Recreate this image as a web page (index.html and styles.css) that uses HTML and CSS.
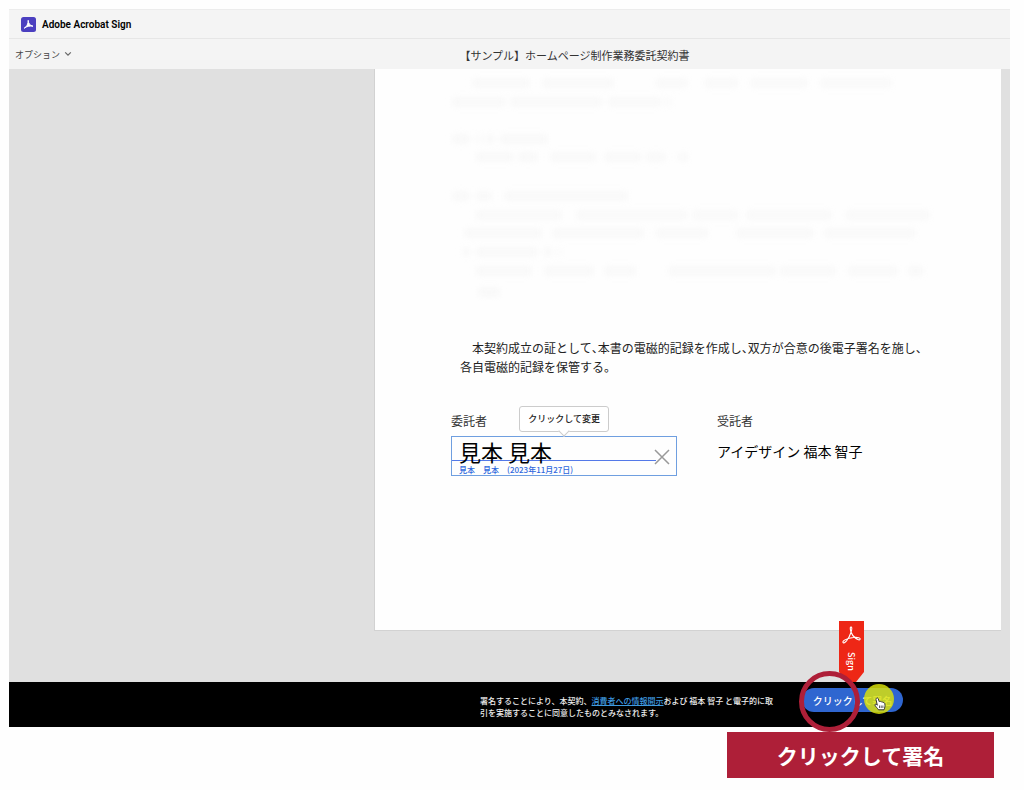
FILE: index.html
```html
<!DOCTYPE html>
<html lang="ja">
<head>
<meta charset="utf-8">
<meta name="viewport" content="width=device-width, initial-scale=1">
<title>Adobe Acrobat Sign</title>
<link rel="stylesheet" href="styles.css">
</head>
<body>
<div class="window">
  <header class="brand">
    <svg class="brand-logo" viewBox="0 0 15 15" aria-hidden="true">
      <rect width="15" height="15" rx="2.5" fill="#4b3fc0"/>
      <path d="M3.2 11.200C5.600 10 7.300 7 7.200 3.300C7.300 6.500 9 8.600 12 9.200C9 8.700 6 9.200 3.200 11.200Z" fill="#fff" stroke="#fff" stroke-width="1" stroke-linejoin="round"/>
    </svg>
    <span class="brand-name">Adobe Acrobat Sign</span>
  </header>
  <div class="toolbar">
    <button class="options" type="button">オプション
      <svg class="chevron" viewBox="0 0 8 6" aria-hidden="true"><path d="M1.200 1.300L4 4.200L6.800 1.300" fill="none" stroke="#666" stroke-width="1.200"/></svg>
    </button>
    <h1 class="doc-title">【サンプル】ホームページ制作業務委託契約書</h1>
  </div>
  <main class="viewer">
    <article class="sheet">
      <svg class="faded" viewBox="0 0 520 240" aria-hidden="true">
        <g fill="none" stroke="#f7f7f7" stroke-width="7">
          <path d="M32 13H480" stroke-dasharray="56 14 70 44 30 18 32 14"/>
          <path d="M12 32H230" stroke-dasharray="52 6 90 8"/>
          <path d="M12 69H106" stroke-dasharray="16 8 4 6 6 8 46 0"/>
          <path d="M36 87H246" stroke-dasharray="36 6 18 14 44 10"/>
          <path d="M12 126H186" stroke-dasharray="16 8 14 14 140 0"/>
          <path d="M36 145H488" stroke-dasharray="84 16 110 6 44 10"/>
          <path d="M24 163H482" stroke-dasharray="76 12 90 14 50 30"/>
          <path d="M22 182H120" stroke-dasharray="6 8 60 8"/>
          <path d="M36 201H482" stroke-dasharray="54 14 48 12 30 34 106 6"/>
          <path d="M38 222H58"/>
        </g>
      </svg>
      <p class="closing">　本契約成立の証として<span class="half">、</span>本書の電磁的記録を作成し<span class="half">、</span>双方が合意の後電子署名を施し、<br>各自電磁的記録を保管する。</p>
      <div class="parties">
        <section class="party">
          <h2 class="role">委託者</h2>
          <div class="field">
            <div class="tip" role="tooltip">クリックして変更</div>
            <div class="signature">見本 見本</div>
            <div class="signed-on">見本　見本　(2023年11月27日)</div>
            <button class="clear" type="button" aria-label="署名を消去">
              <svg viewBox="0 0 16 16" aria-hidden="true"><path d="M1 1L15 15M15 1L1 15" stroke="#999" stroke-width="1.500"/></svg>
            </button>
          </div>
        </section>
        <section class="party">
          <h2 class="role">受託者</h2>
          <div class="contractor">アイデザイン 福本 智子</div>
        </section>
      </div>
    </article>
  </main>
  <footer class="consent">
    <p class="consent-text">署名することにより、本契約、<a href="#">消費者への情報開示</a>および 福本 智子 と電子的に取<br>引を実施することに同意したものとみなされます。</p>
    <div class="action">
      <div class="ribbon">
        <svg class="ribbon-shape" viewBox="0 0 25 61" aria-hidden="true">
          <path d="M0 0H25V51L17 61H8L0 51Z" fill="#ee2716"/>
          <path d="M4 21.500C3 20 8 17 14.500 16.500C19 16 22 17 21 18.500C20 20 14 17 12 11C11 8 11 5.500 12.300 6C13.800 7 11.500 15 7.500 19.800C6 21.500 4.500 22.500 4 21.500Z" fill="none" stroke="#fff" stroke-width="1.100"/>
        </svg>
        <span class="ribbon-label">Sign</span>
      </div>
      <button class="sign" type="button">クリックして署名</button>
      <span class="spot"></span>
      <span class="ring"></span>
      <svg class="pointer" viewBox="0 0 12 14" aria-hidden="true">
        <path d="M2.500 1.200C3.300 .6 4 1 4.300 1.800L5.200 4.600C6 4.100 6.900 4.300 7.200 5C8 4.600 8.800 4.900 9 5.600C10 5.300 10.800 5.900 10.900 7C11.100 9 11 10.500 10 12.800H4.500C3.500 11.200 1.500 9.500 .8 8C1 6.800 2.300 7 3.300 8.200L2 2.600C1.900 2 2 1.500 2.500 1.200Z" fill="#fff" stroke="#333"/>
        <path d="M5.500 8.500V11M7.200 8.500V11M8.900 8.500V11" stroke="#333" stroke-width=".8"/>
      </svg>
    </div>
  </footer>
</div>
<div class="caption">クリックして署名</div>
</body>
</html>
```
FILE: styles.css
```css
* { box-sizing: border-box; }

body {
  margin: 0;
  padding: 9px 14px 12px 9px;
  background: #fefefe;
  color: #222;
  font-family: "Noto Sans CJK JP", "Liberation Sans", sans-serif;
}

h1, h2, p { margin: 0; font-weight: 400; }

button {
  padding: 0;
  border: 0;
  background: none;
  color: inherit;
  font-family: inherit;
  cursor: pointer;
}

.brand {
  display: flex;
  align-items: center;
  gap: 6px;
  height: 30px;
  padding-left: 12px;
  border-top: 1px solid #ececec;
  border-bottom: 1px solid #e6e6e6;
  background: #f4f4f4;
}
.brand-logo { width: 15px; height: 15px; }
.brand-name {
  font-family: Roboto, "Liberation Sans", sans-serif;
  font-size: 10px;
  font-weight: 600;
  color: #000;
}

.toolbar {
  display: grid;
  grid-template-columns: 1fr auto 1fr;
  align-items: center;
  height: 30px;
  padding: 0 6px;
  background: #f4f4f4;
}
.options {
  display: flex;
  align-items: center;
  justify-self: start;
  gap: 4px;
  font-size: 9px;
  color: #444;
}
.chevron { width: 8px; height: 6px; }
.doc-title {
  padding: 2px 0 0 130px;
  font-size: 11px;
  line-height: 16px;
  color: #333;
}

.viewer { padding: 0 9px 51px 0; background: #e0e0e0; }
.sheet {
  margin-left: 36.8%;
  padding: 1px 40px 154px 66px;
  border-left: 1px solid #d2d2d2;
  border-bottom: 1px solid #d2d2d2;
  background: #fefefe;
}
.faded { display: block; width: 100%; max-width: 520px; height: 240px; filter: blur(3px); }
.closing {
  margin-top: 28px;
  padding-left: 19px;
  font-size: 12px;
  line-height: 19px;
  white-space: nowrap;
}
.half { font-feature-settings: "halt"; }

.parties {
  display: grid;
  grid-template-columns: 226px 1fr;
  gap: 40px;
  margin: 35px 0 0 10px;
}
.role { margin-bottom: 5px; font-size: 12px; line-height: 20px; color: #333; }
.contractor { padding-top: 4px; font-size: 14px; line-height: 22px; color: #000; }

.field { position: relative; border: 1px solid #6f9fe0; }
.signature {
  height: 24px;
  margin-right: 20px;
  padding-left: 7px;
  border-bottom: 1px solid #5479e8;
  font-size: 22px;
  line-height: 28px;
  color: #000;
}
.signed-on {
  padding: 4px 0 0 7px;
  font-size: 8px;
  font-weight: 500;
  line-height: 10px;
  color: #2f68dd;
}
.clear { position: absolute; top: 12px; right: 6px; width: 16px; height: 16px; }
.clear svg { display: block; }

.tip {
  position: absolute;
  bottom: 43px;
  left: 67px;
  width: 90px;
  border: 1px solid #ccc;
  border-radius: 3px;
  background: #fff;
  font-size: 9px;
  font-weight: 500;
  line-height: 24px;
  text-align: center;
}
.tip::after {
  content: "";
  position: absolute;
  bottom: -4px;
  left: 40px;
  width: 7px;
  height: 7px;
  border: solid #ccc;
  border-width: 0 1px 1px 0;
  background: #fff;
  transform: rotate(45deg);
}

.consent {
  display: flex;
  align-items: flex-start;
  justify-content: flex-end;
  gap: 18px;
  padding: 6px 107px 8px 12px;
  background: #000;
}
.consent-text {
  width: 304px;
  padding-top: 7px;
  color: #eee;
  font-size: 8px;
  font-weight: 500;
  line-height: 12px;
  white-space: nowrap;
}
.consent-text a { color: #3f9be0; }

.action { position: relative; width: 101px; }
.sign {
  display: block;
  width: 100%;
  height: 24px;
  border-radius: 12px;
  background: #2f66d0;
  color: #fff;
  font-size: 10px;
  font-weight: 500;
}
.ribbon { position: absolute; bottom: 30px; left: 37px; width: 25px; height: 61px; }
.ribbon-shape { display: block; width: 25px; height: 61px; }
.ribbon-label {
  position: absolute;
  top: 31px;
  left: 5px;
  color: #fff;
  font-size: 9px;
  font-weight: 500;
  line-height: 14px;
  writing-mode: vertical-rl;
}
.spot {
  position: absolute;
  top: -4px;
  left: 62px;
  width: 30px;
  height: 30px;
  border-radius: 50%;
  background: rgba(218, 225, 10, .84);
}
.ring {
  position: absolute;
  top: -17px;
  left: -3px;
  width: 61px;
  height: 61px;
  border: 5px solid #ae1f38;
  border-radius: 50%;
}
.pointer { position: absolute; top: 9px; left: 72px; width: 12px; height: 14px; }

.caption {
  width: 267px;
  margin: 5px 16px 0 auto;
  background: #ae1f38;
  color: #fff;
  font-size: 21px;
  font-weight: 700;
  line-height: 46px;
  text-align: center;
}
```
